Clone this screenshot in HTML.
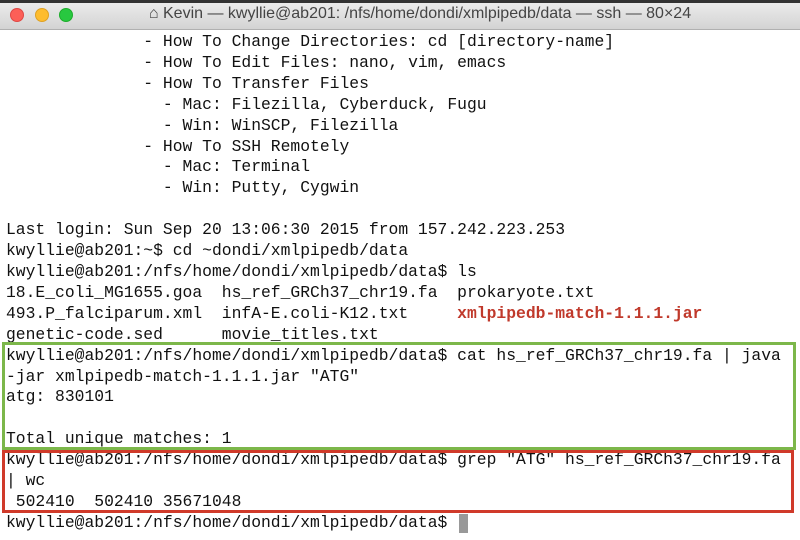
<!DOCTYPE html>
<html><head><meta charset="utf-8"><style>
html,body{margin:0;padding:0;width:800px;height:540px;overflow:hidden;background:#fff}
.top{position:absolute;left:0;top:0;width:800px;height:3px;background:#333}
.tb{position:absolute;left:0;top:3px;width:800px;height:27px;background:linear-gradient(#ebebeb,#d3d3d3);border-bottom:1px solid #b0b0b0;box-sizing:border-box}
.dot{position:absolute;top:5px;width:14px;height:14px;border-radius:50%;box-sizing:border-box}
.title{position:absolute;left:0;right:0;top:2px;text-align:center;font:16px "Liberation Sans",sans-serif;color:#444;padding-left:40px}
pre{position:absolute;left:6px;top:32px;margin:0;font:16.35px/20.9px "Liberation Mono",monospace;color:#111}
.red{color:#c0392b;font-weight:bold}
.box{position:absolute;box-sizing:border-box;border:3px solid}
.cur{position:absolute;left:459px;top:514px;width:9px;height:19px;background:#999}
</style></head><body>
<div class="top"></div>
<div class="tb">
<div class="dot" style="left:10px;background:#fc5f57;border:1px solid #df4744"></div>
<div class="dot" style="left:35px;background:#fdbc2e;border:1px solid #dea123"></div>
<div class="dot" style="left:59px;background:#28c840;border:1px solid #1dad2b"></div>
<div class="title">⌂ Kevin — kwyllie@ab201: /nfs/home/dondi/xmlpipedb/data — ssh — 80×24</div>
</div>
<pre>              - How To Change Directories: cd [directory-name]
              - How To Edit Files: nano, vim, emacs
              - How To Transfer Files
                - Mac: Filezilla, Cyberduck, Fugu
                - Win: WinSCP, Filezilla
              - How To SSH Remotely
                - Mac: Terminal
                - Win: Putty, Cygwin

Last login: Sun Sep 20 13:06:30 2015 from 157.242.223.253
kwyllie@ab201:~$ cd ~dondi/xmlpipedb/data
kwyllie@ab201:/nfs/home/dondi/xmlpipedb/data$ ls
18.E_coli_MG1655.goa  hs_ref_GRCh37_chr19.fa  prokaryote.txt
493.P_falciparum.xml  infA-E.coli-K12.txt     <span class="red">xmlpipedb-match-1.1.1.jar</span>
genetic-code.sed      movie_titles.txt
kwyllie@ab201:/nfs/home/dondi/xmlpipedb/data$ cat hs_ref_GRCh37_chr19.fa | java
-jar xmlpipedb-match-1.1.1.jar "ATG"
atg: 830101

Total unique matches: 1
kwyllie@ab201:/nfs/home/dondi/xmlpipedb/data$ grep "ATG" hs_ref_GRCh37_chr19.fa
| wc
 502410  502410 35671048
kwyllie@ab201:/nfs/home/dondi/xmlpipedb/data$ </pre>
<div class="box" style="left:2px;top:342px;width:794px;height:108px;border-color:#7cb74a"></div>
<div class="box" style="left:2px;top:450px;width:792px;height:63px;border-color:#d03a2a"></div>
<div class="cur"></div>
</body></html>
